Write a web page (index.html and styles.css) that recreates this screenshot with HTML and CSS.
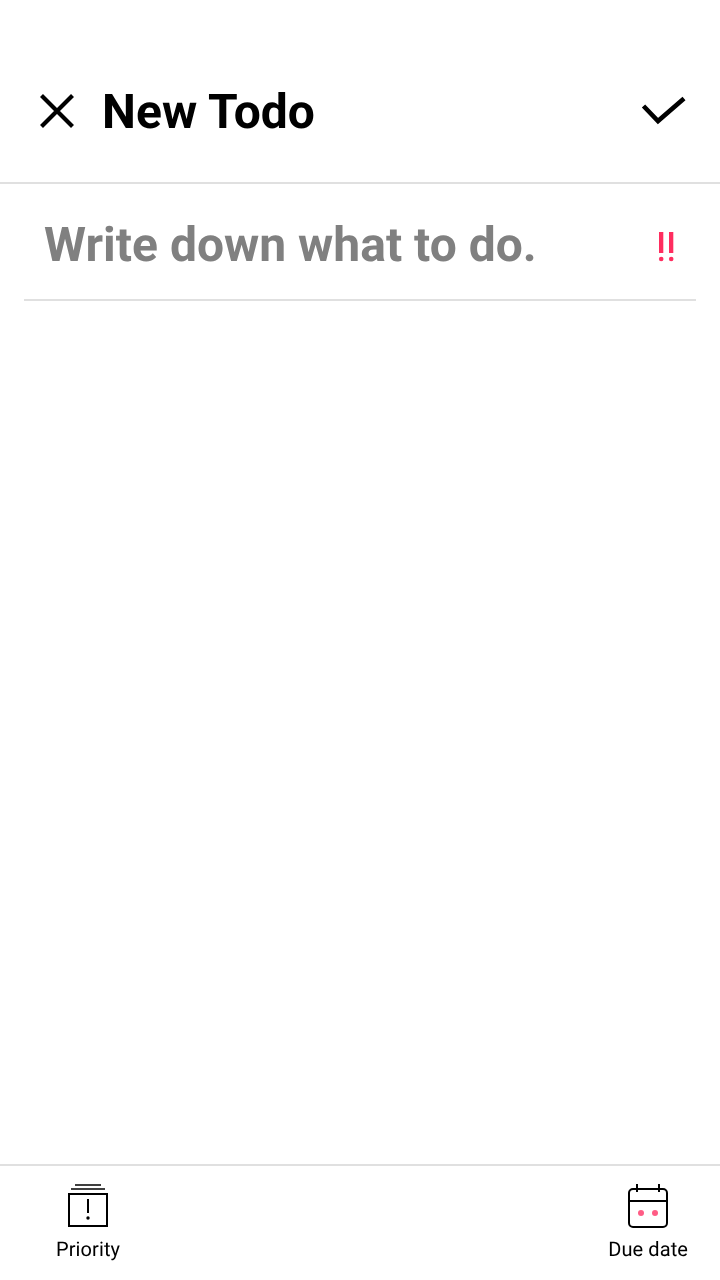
FILE: index.html
```html
<!DOCTYPE html>
<html lang="en">
  <head>
    <meta charset="UTF-8" />
    <meta name="viewport" content="width=device-width, initial-scale=1.0" />
    <title>New Todo</title>
    <link rel="stylesheet" href="styles.css">
  </head>
  <body>
    <header class="top-bar">
      <svg class="close-icon" width="36" height="36" viewBox="0 0 36 36">
        <path d="M2.500 2.500 L33.500 33.500 M33.500 2.500 L2.500 33.500" stroke="#000" stroke-width="4.200" fill="none" />
      </svg>
      <h1 class="title">New Todo</h1>
      <svg class="done-icon" width="46" height="32" viewBox="0 0 46 32">
        <path d="M3.500 11 L18 26 L44 3.500" stroke="#000" stroke-width="4.600" fill="none" />
      </svg>
    </header>

    <section class="todo-row">
      <div class="todo-text">Write down what to do.</div>
      <svg class="marks" width="18" height="30" viewBox="0 0 18 30">
        <rect x="1" y="0" width="4.300" height="21" fill="#ff2d5f" />
        <rect x="11" y="0" width="4.300" height="21" fill="#ff2d5f" />
        <circle cx="3.200" cy="27" r="2.300" fill="#ff2d5f" />
        <circle cx="13.200" cy="27" r="2.300" fill="#ff2d5f" />
      </svg>
    </section>

    <main class="spacer"></main>

    <footer class="bottom-bar">
      <div class="tool">
        <svg width="42" height="44" viewBox="0 0 42 44">
          <path d="M8 1 H34 M4 5 H38" stroke="#000" stroke-width="1.600" fill="none" />
          <rect x="2" y="10" width="38" height="32" fill="none" stroke="#000" stroke-width="2" />
          <path d="M21 15 V29" stroke="#000" stroke-width="2" />
          <circle cx="21" cy="34" r="1.700" fill="#000" />
        </svg>
        <span>Priority</span>
      </div>
      <div class="tool">
        <svg width="42" height="44" viewBox="0 0 42 44">
          <rect x="2" y="5" width="38" height="38" rx="4" fill="none" stroke="#000" stroke-width="2" />
          <path d="M2 17 H40 M10 0 V8 M32 0 V8" stroke="#000" stroke-width="2" fill="none" />
          <circle cx="14" cy="29" r="3" fill="#ff5c85" />
          <circle cx="28" cy="29" r="3" fill="#ff5c85" />
        </svg>
        <span>Due date</span>
      </div>
    </footer>
  </body>
</html>
```

FILE: styles.css
```css
html,
body {
  height: 100%;
}
body {
  font-family: Roboto, "Liberation Sans", sans-serif;
  text-rendering: geometricPrecision;
  will-change: opacity;
  margin: 0;
  color: #000;
  display: flex;
  flex-direction: column;
}
.top-bar {
  height: 184px;
  box-sizing: border-box;
  display: flex;
  align-items: center;
  padding: 40px 34px 0 39px;
  border-bottom: 2px solid #e0e0e0;
}
.title {
  margin: 0 0 0 27px;
  font-size: 48px;
  font-weight: 700;
  letter-spacing: 0.05px;
  flex: 1;
}
.todo-row {
  margin: 0 24px;
  height: 117px;
  box-sizing: border-box;
  display: flex;
  align-items: center;
  justify-content: space-between;
  padding: 0 20px;
  border-bottom: 2px solid #e0e0e0;
}
.todo-text {
  padding-top: 6px;
  font-size: 48px;
  font-weight: 700;
  color: #808080;
}
.marks {
  margin-top: 11px;
}
.spacer {
  flex: 1;
}
.bottom-bar {
  height: 116px;
  box-sizing: border-box;
  border-top: 2px solid #e0e0e0;
  display: flex;
  justify-content: space-between;
  padding: 18px 32px 0 56px;
}
.tool {
  display: flex;
  flex-direction: column;
  align-items: center;
  gap: 9px;
  font-size: 20px;
  letter-spacing: 0.1px;
}
```
